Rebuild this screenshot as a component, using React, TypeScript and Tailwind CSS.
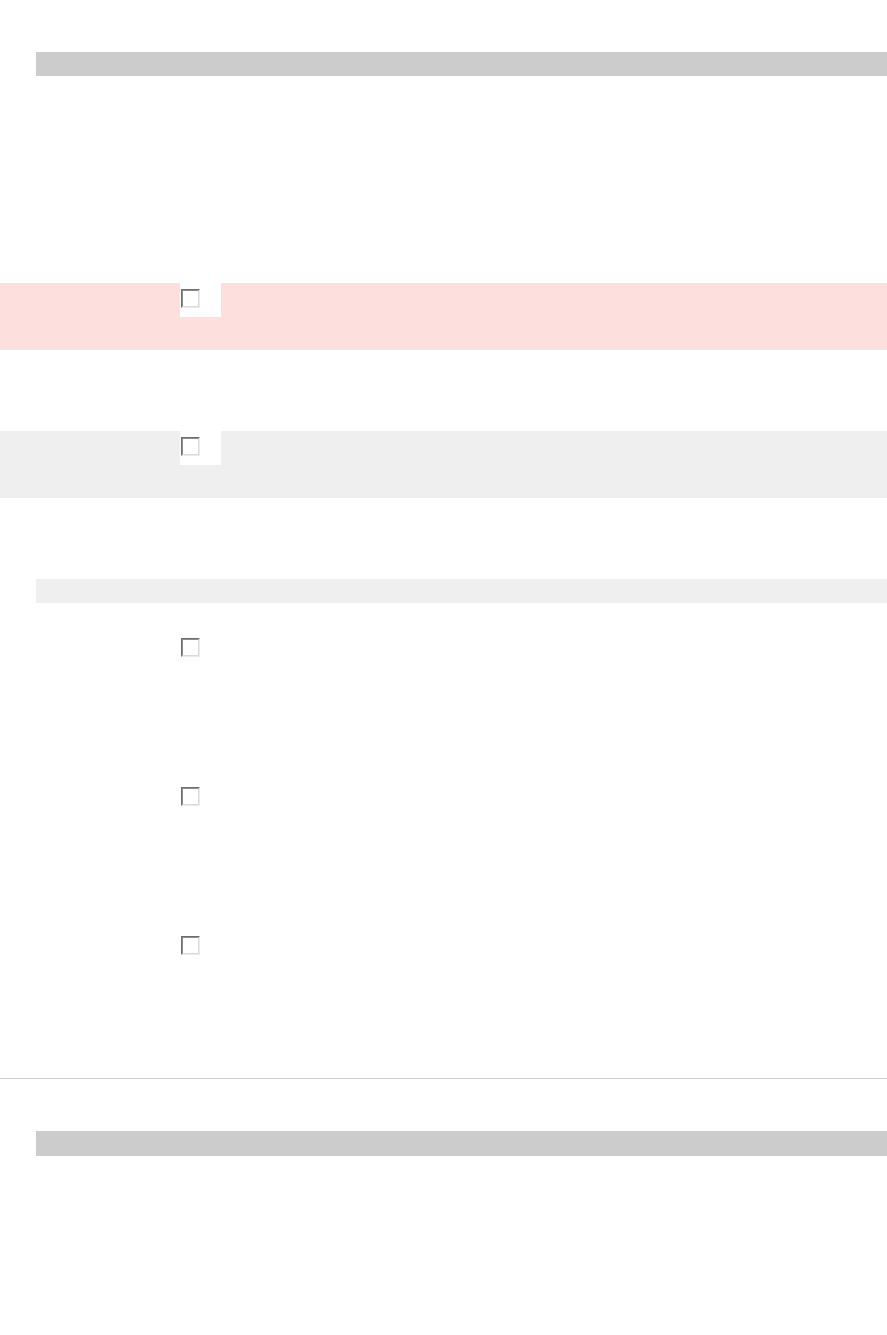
import React from "react";

function Check() {
  return (
    <div className="w-[19px] h-[19px] border border-t-[#6f6f6f] border-l-[#6f6f6f] border-b-[#ebebeb] border-r-[#ebebeb]">
      <div className="w-full h-full border border-t-[#8c8c8c] border-l-[#8c8c8c] border-b-[#dadada] border-r-[#dadada] bg-white" />
    </div>
  );
}

function HighlightRow({ bg }: { bg: string }) {
  return (
    <div className={`h-[67px] w-full ${bg} flex`}>
      <div className="ml-[180px] w-[41px] h-[34px] bg-white pl-[1px] pt-[6px]">
        <Check />
      </div>
    </div>
  );
}

function PlainRow({ h }: { h: string }) {
  return (
    <div className={`${h} flex`}>
      <div className="ml-[181px] mt-[35px]">
        <Check />
      </div>
    </div>
  );
}

export default function App() {
  return (
    <div className="w-[887px] min-h-[1335px] bg-white font-['Liberation_Sans',sans-serif]">
      <div className="pt-[52px]">
        <div className="ml-[36px] h-[24px] bg-[#cccccc]" />
      </div>
      <div className="mt-[207px]">
        <HighlightRow bg="bg-[#fde0de]" />
      </div>
      <div className="mt-[81px]">
        <HighlightRow bg="bg-[#efefef]" />
      </div>
      <div className="mt-[81px] ml-[36px] h-[24px] bg-[#efefef]" />
      <div>
        <PlainRow h="h-[149px]" />
        <PlainRow h="h-[149px]" />
        <PlainRow h="h-[177px]" />
      </div>
      <div className="h-[1px] bg-[#cccccc]" />
      <div className="mt-[52px] ml-[36px] h-[25px] bg-[#cccccc]" />
    </div>
  );
}
